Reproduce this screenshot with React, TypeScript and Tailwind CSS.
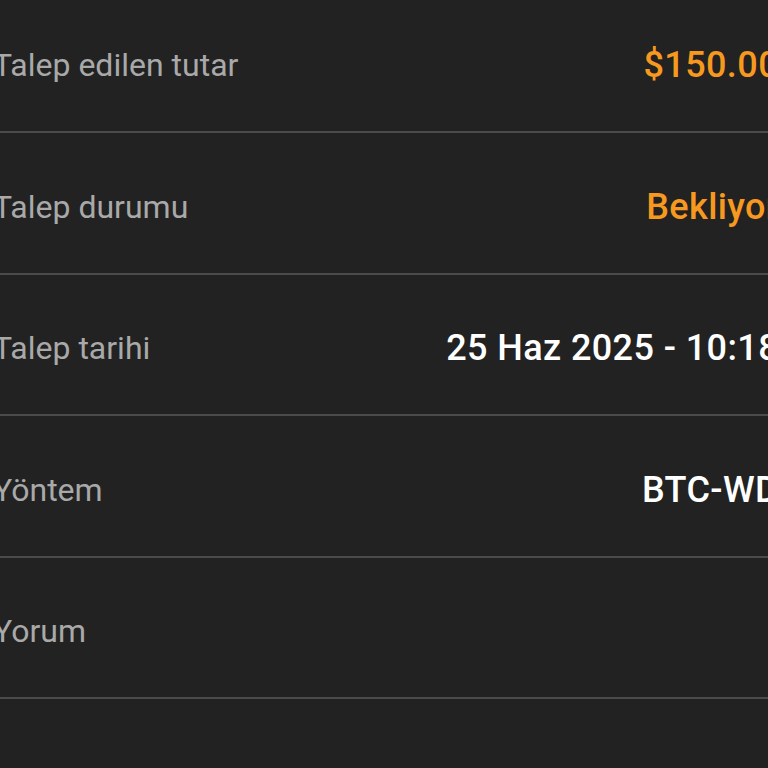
import React from 'react';

const rows = [
  { label: 'Talep edilen tutar', value: '$150.00', tone: 'text-[#f7991f]' },
  { label: 'Talep durumu', value: 'Bekliyor', tone: 'text-[#f7991f]' },
  { label: 'Talep tarihi', value: '25 Haz 2025 - 10:18', tone: 'text-white' },
  { label: 'Yöntem', value: 'BTC-WD', tone: 'text-white' },
  { label: 'Yorum', value: '', tone: 'text-white' },
];

export default function App() {
  return (
    <div className="h-[768px] w-[768px] overflow-hidden bg-[#222222] font-['Roboto',sans-serif]">
      <div className="-mt-[8.5px] -ml-[7px] w-[786px]">
        {rows.map((row) => (
          <div
            key={row.label}
            className="flex h-[141.5px] items-center justify-between border-b-2 border-[#4b4b4b] pt-[8px]"
          >
            <span className="text-[32px] text-[#a9a9a9]">{row.label}</span>
            <span className={`text-[36px] font-medium tracking-[0.4px] ${row.tone}`}>{row.value}</span>
          </div>
        ))}
      </div>
    </div>
  );
}
